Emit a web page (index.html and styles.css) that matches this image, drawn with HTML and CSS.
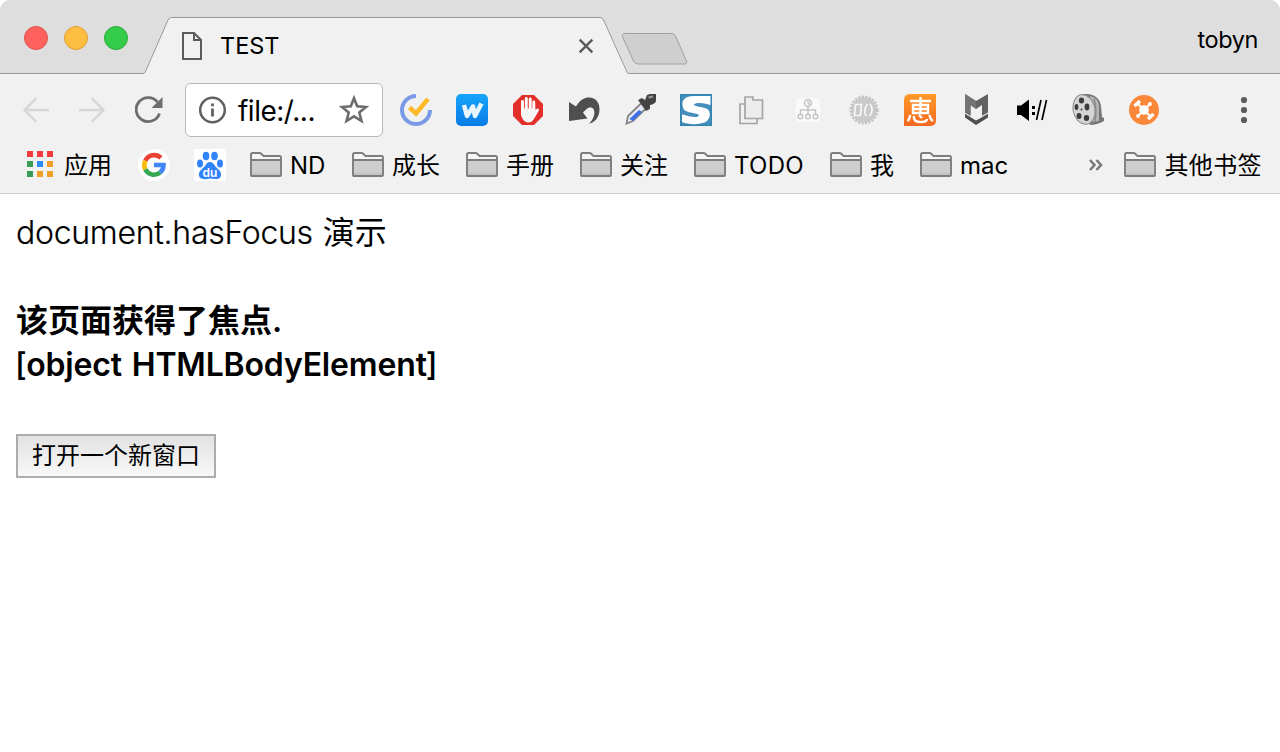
FILE: index.html
```html
<!DOCTYPE html>
<html lang="zh-CN">
<head>
<meta charset="utf-8">
<title>TEST</title>
<link rel="stylesheet" href="styles.css">
</head>
<body>
<svg class="defs" width="0" height="0" aria-hidden="true">
  <symbol id="folder" viewBox="0 0 32 26">
    <path d="M1 8V2.5Q1 1 2.500 1H9.500Q10.500 1 11.500 2L13.500 4H29.500Q31 4 31 5.500V8Z" fill="#f6f6f6"/>
    <path d="M1 8H31V24H1Z" fill="#cecece"/><path d="M2 21H30V24H2Z" fill="#c2c2c2"/>
    <path d="M1 8V2.500Q1 1 2.500 1H9.500Q10.500 1 11.500 2L13.500 4H29.500Q31 4 31 5.500V23Q31 24 30 24H2Q1 24 1 23ZM1 8H31" fill="none" stroke="#7d7d7d" stroke-width="1.900"/>
  </symbol>
</svg>
<header class="browser">
  <div class="strip">
    <svg class="strip-shape" width="1280" height="74" viewBox="0 0 1280 74">
      <path d="M0 73.500H143Q144.500 73.500 145.300 72L168 20Q169.300 17.500 171.500 17.500H600Q602.300 17.500 603.500 20L627 72Q627.700 73.500 629 73.500H1280V75H0Z" fill="#f1f1f1" stroke="#999"/>
      <path d="M625 33.500H671.500Q674 33.500 675.500 36L686.300 60.500Q687.500 64 685 64H638Q635 64 633.500 61L622.500 37Q621.500 33.500 625 33.500Z" fill="#cfcfcf" stroke="#a0a0a0"/>
    </svg>
    <div class="lights"><i class="light red"></i><i class="light yellow"></i><i class="light green"></i></div>
    <div class="tab">
      <svg width="22" height="30" viewBox="0 0 22 30" fill="none" stroke="#5b5b5e" stroke-width="2"><path d="M2 2H13L20 9V28H2ZM13 2V9H20"/></svg>
      <span class="tab-title">TEST</span>
      <svg class="close" width="16" height="16" viewBox="0 0 16 16"><path d="M1.700 1.700L14.300 14.300M14.300 1.700L1.700 14.300" stroke="#5a5a5a" stroke-width="2.400"/></svg>
    </div>
    <span class="user">tobyn</span>
  </div>

  <div class="toolbar">
    <svg class="nav" width="28" height="28" viewBox="0 0 28 28" fill="none" stroke="#d6d6d6" stroke-width="2.400"><path d="M27 14H3M14.500 2L2.500 14L14.500 26"/></svg>
    <svg class="nav" width="28" height="28" viewBox="0 0 28 28" fill="none" stroke="#d6d6d6" stroke-width="2.400"><path d="M1 14H25M13.500 2L25.500 14L13.500 26"/></svg>
    <svg class="nav" width="28" height="28" viewBox="0 0 28 28"><path d="M24.500 17.500A12 12 0 1 1 22.500 6" fill="none" stroke="#6e6e6e" stroke-width="2.800"/><path d="M27.500 1V12H16.500Z" fill="#6e6e6e"/></svg>
    <div class="address">
      <svg width="28" height="28" viewBox="0 0 28 28"><circle cx="13.500" cy="14" r="12.300" fill="none" stroke="#606060" stroke-width="2.500"/><path d="M12.100 7.500H14.900V10.300H12.100ZM12.100 12.600H14.900V20.500H12.100Z" fill="#606060"/></svg>
      <span class="url">file:/...</span>
      <svg class="star" width="30" height="30" viewBox="0 0 30 30"><path d="M15 3.200L18.200 11.300L27 12L20.300 17.500L22.500 26L15 21.400L7.500 26L9.700 17.500L3 12L11.800 11.300Z" fill="none" stroke="#6c6c6c" stroke-width="2.600"/></svg>
    </div>
    <div class="extensions">
      <svg viewBox="0 0 32 32" fill="none"><path d="M16 2A14 14 0 1 0 30 16" stroke="#7b9ae6" stroke-width="4"/><path d="M9.500 13.500L16 19.500L28 5" stroke="#ffb928" stroke-width="4.500"/></svg>
      <svg viewBox="0 0 32 32"><defs><linearGradient id="blue" x2="0" y2="1"><stop stop-color="#16a5fb"/><stop offset="1" stop-color="#087be6"/></linearGradient></defs><rect width="32" height="32" rx="5" fill="url(#blue)"/><path d="M8 11L11 22L17 12.500L19 22L25.500 9.500" fill="none" stroke="#e9f6ff" stroke-width="4.500" stroke-linejoin="round"/></svg>
      <svg viewBox="0 0 32 32"><path d="M10 1H22L31 10V22L22 31H10L1 22V10Z" fill="#e42e2a"/><path d="M10.500 18V7.500M14.300 16V4.500M18.200 16V5M21.800 18V8M22 22L25.500 16" stroke="#fff" stroke-width="2.900" stroke-linecap="round"/><path d="M9 14.500H23.300L24 18L22.500 24Q20 29 15.500 28.500Q11 28 9 21Z" fill="#f5f5f5"/></svg>
      <svg viewBox="0 0 32 32"><path d="M1 8L8 12.500C12 6 16 3.500 21 3.500C28 3.500 31.500 9 31.500 15C31.500 23 27 28.500 21 29.500C25.500 25 26.500 20 24.500 17C22.500 14 18 15.500 15 18.500L19.500 24.500L1 27Z" fill="#4f4f4f"/><path d="M16.500 20C16.500 14.500 22.500 11.500 25.500 15C28 19 25 26 21 29.500C24 25 24.500 20 23 18.500C21 17 18.500 18 16.500 20Z" fill="#f1f1f1"/></svg>
      <svg viewBox="0 0 32 32"><path d="M4 22L17.500 9L22.500 14L9 27L2.500 29.500Z" fill="#e8e9f8" stroke="#858585" stroke-width="1.800"/><path d="M5.500 25L15 16L18 18L9 27Z" fill="#3c6ee8"/><path d="M14 6L18 4L21 6L23 1Q27-1 32 0V7Q31 10 26 11L26 15L22 17Z" fill="#444"/><path d="M24.500 3.500L29 2.500" stroke="#999" stroke-width="2"/></svg>
      <svg viewBox="0 0 32 32"><rect width="32" height="32" fill="#3583af"/><rect x="1.500" y="1.500" width="29" height="29" fill="#458fbd"/><path d="M30.500 2H14C5 2 2 6 2.500 11C3 17 7 18 13 19C19 20 20 21 18 22.500C15 24 8 22 2 20.500V28C9 31 22 31 27 27C32 22 30 15 25 14C19 12.500 13 12 14 10.500C17 8 24 9 30.500 11Z" fill="#fff"/></svg>
      <svg viewBox="0 0 32 32" fill="none" stroke="#a5a5a5" stroke-width="1.700"><path d="M9 10H4V29.500H21V25"/><path d="M9 3H17V6H26.500V24.500H9Z" fill="#ececec"/></svg>
      <svg viewBox="0 0 32 32" fill="none" stroke="#c5c5c5" stroke-width="1.500"><rect x="4" y="4" width="24" height="24" rx="4" fill="#fafafa" stroke="none"/><circle cx="16" cy="9" r="3.500"/><path d="M16 13V20M8.500 20V16H23.500V20M15 8H17V11"/><circle cx="8.500" cy="22.500" r="2.300"/><circle cx="16" cy="22.500" r="2.300"/><circle cx="23.500" cy="22.500" r="2.300"/></svg>
      <svg viewBox="0 0 32 32" fill="none"><circle cx="16" cy="16" r="12.500" fill="#cacaca"/><circle cx="16" cy="16" r="13.200" stroke="#c2c2c2" stroke-width="2.600" stroke-dasharray="2.200 1.300"/><path d="M7.500 10.500H13.500L12.500 21.500H6.500ZM19.500 10Q15 16 18 22M22 10Q26.500 16 21.500 22" stroke="#f7f7f7" stroke-width="1.700"/></svg>
      <svg viewBox="0 0 32 32" fill="none"><defs><linearGradient id="orange" x2="0" y2="1"><stop stop-color="#ff9a28"/><stop offset="1" stop-color="#f36820"/></linearGradient></defs><path d="M6 0H32V26Q32 32 26 32H0V6Q0 0 6 0Z" fill="url(#orange)"/><path d="M6 7H27M16.500 3V20M9 11H24V19H9ZM9 15H24M6 21Q6 25 3.500 27M10 22Q9 28 16.500 28Q23 28 23 25M15 21L18 24M25.500 21Q26 25 29 27" stroke="#fff" stroke-width="2.400"/></svg>
      <svg viewBox="0 0 32 32"><path d="M5 0L16 7L28 0V20L22 23V11L16 15L10.500 11V23L5 20Z" fill="#626262"/><path d="M5 20L16 26.500L28 20V23.500L16 31L5 23.500Z" fill="#4f4f4f"/><path d="M5 19L16 25.500L28 19" stroke="#f1f1f1" stroke-width="1" fill="none"/><path d="M5 0L16 7V15L10.500 11V21L5 18Z" fill="#737373"/></svg>
      <svg viewBox="0 0 32 32"><path d="M1 11.500H5L13 5.500V27L5 21H1Z" fill="#000"/><path d="M16 12H19V15H16ZM16 18H19V21H16Z" fill="#000"/><path d="M20.500 26L25 6M26 26L30.500 6" stroke="#000" stroke-width="1.700"/></svg>
      <svg viewBox="0 0 32 32"><path d="M10 0Q27-1 29 12L30 23L32 24V27Q25 31 18 31Z" fill="#777"/><path d="M18 2Q27 4 27 13V27L20 28Z" fill="#b5b5b5"/><path d="M22 5Q25 14 23 28" fill="none" stroke="#888" stroke-width="1.500"/><ellipse cx="12" cy="15.500" rx="10.800" ry="15" fill="#d4d4d4" stroke="#8d8d8d" transform="rotate(-12 12 15.500)"/><g fill="#3c3c3c"><ellipse cx="9.500" cy="6.500" rx="2.600" ry="3"/><ellipse cx="4.500" cy="13" rx="1.900" ry="3"/><ellipse cx="15" cy="13" rx="2.400" ry="3.400"/><ellipse cx="7" cy="22" rx="2.500" ry="3"/><ellipse cx="14.500" cy="24" rx="2.700" ry="3"/><circle cx="9.500" cy="15.500" r="1"/></g></svg>
      <svg viewBox="0 0 32 32"><circle cx="16" cy="16" r="15" fill="#fa873a"/><path d="M9 9L23 23M22 10L10 22" stroke="#fff" stroke-width="2"/><circle cx="16" cy="16" r="4.800" fill="#fff"/><path d="M6.500 12L12 7M20 25L25.500 20" stroke="#fff" stroke-width="3.500"/><circle cx="22" cy="10" r="1.900" fill="#fff"/><circle cx="10" cy="22" r="1.900" fill="#fff"/></svg>
    </div>
    <svg class="more" width="8" height="28" viewBox="0 0 8 28" fill="#5c5c5c"><circle cx="4" cy="4" r="3.100"/><circle cx="4" cy="14" r="3.100"/><circle cx="4" cy="24" r="3.100"/></svg>
  </div>

  <nav class="bookmarks">
    <div class="bm apps">
      <svg class="grid" width="26" height="26" viewBox="0 0 26 26"><path d="M0 0H6V6H0ZM10 0H16V6H10ZM20 0H26V6H20Z" fill="#f33b3b"/><path d="M0 10H6V16H0ZM0 20H6V26H0Z" fill="#3a9b57"/><path d="M10 10H16V16H10Z" fill="#2f8dfa"/><path d="M20 10H26V16H20ZM10 20H16V26H10ZM20 20H26V26H20Z" fill="#f0a029"/></svg>
      <span>应用</span>
    </div>
    <div class="bm w56">
      <svg width="32" height="32" viewBox="0 0 32 32" fill="none" stroke-width="4.600"><circle cx="16" cy="16" r="16" fill="#fff"/><path d="M22.900 8.900A9.700 9.700 0 0 0 7.300 11.700" stroke="#ea4335"/><path d="M7.300 11.700A9.700 9.700 0 0 0 7.300 20.300" stroke="#fbbc05"/><path d="M7.300 20.300A9.700 9.700 0 0 0 22.200 23.500" stroke="#34a853"/><path d="M22.200 23.500A9.700 9.700 0 0 0 25.500 16H16" stroke="#4285f4"/></svg>
    </div>
    <div class="bm w56">
      <svg width="32" height="32" viewBox="0 0 32 32"><path fill="#fff" d="M0 0H32V32H0Z"/><g fill="#3083fb"><ellipse cx="12" cy="7" rx="3.300" ry="4.300"/><ellipse cx="20.500" cy="7" rx="3.300" ry="4.300"/><ellipse cx="6" cy="14.500" rx="3" ry="4"/><ellipse cx="26" cy="14.500" rx="3" ry="4"/><path d="M16 13Q19 13 21 17L26 22Q29 28 24 30Q20 30 16 29.500Q11 31 7 29.500Q3 27 6 22L11 17Q13 13 16 13Z"/></g><text class="du" x="8.500" y="27.500">du</text></svg>
    </div>
    <div class="bm w102"><svg class="folder"><use href="#folder"/></svg><span>ND</span></div>
    <div class="bm w114"><svg class="folder"><use href="#folder"/></svg><span>成长</span></div>
    <div class="bm w114"><svg class="folder"><use href="#folder"/></svg><span>手册</span></div>
    <div class="bm w114"><svg class="folder"><use href="#folder"/></svg><span>关注</span></div>
    <div class="bm w136"><svg class="folder"><use href="#folder"/></svg><span>TODO</span></div>
    <div class="bm w90"><svg class="folder"><use href="#folder"/></svg><span>我</span></div>
    <div class="bm"><svg class="folder"><use href="#folder"/></svg><span>mac</span></div>
    <svg class="overflow" width="14" height="12" viewBox="0 0 14 12" fill="none" stroke="#777" stroke-width="2.500"><path d="M1 1L5.500 6L1 11M7.500 1L12 6L7.500 11"/></svg>
    <div class="bm other"><svg class="folder"><use href="#folder"/></svg><span>其他书签</span></div>
  </nav>
</header>
<main class="page">
  <p class="heading"><span class="latin">document.hasFocus</span> 演示</p>
  <div class="status">该页面获得了焦点.</div>
  <div class="status object"><span class="bracket">[</span>object HTMLBodyElement<span class="bracket">]</span></div>
  <button class="open"><span>打开一个新窗口</span></button>
</main>
</body>
</html>
```
FILE: styles.css
```css
* { box-sizing: border-box; }
body { margin: 0; background: #fff; color: #000; font-family: Inter, "Noto Sans CJK SC", sans-serif; width: 1280px; height: 752px; overflow: hidden; }
svg { display: block; flex: none; }
.defs { position: absolute; }
.browser { height: 194px; background: #f1f1f1; border-bottom: 1px solid #cdcdcd; border-radius: 10px 10px 0 0; overflow: hidden; }
.strip { position: relative; height: 74px; background: #dedede; display: flex; }
.strip-shape { position: absolute; inset: 0; }
.lights { display: flex; gap: 16px; padding: 26px 0 0 24px; width: 182px; }
.light { width: 24px; height: 24px; border-radius: 50%; border: 1px solid; }
.red { background: #fd625d; border-color: #e2504b; }
.yellow { background: #fdbe41; border-color: #e0a136; }
.green { background: #35cb4b; border-color: #27ac31; }
.tab { position: relative; display: flex; align-items: center; width: 413px; height: 56px; margin-top: 18px; margin-left: -1px; }
.tab-title { font-size: 23.5px; line-height: 28px; margin-left: 17px; }
.close { margin-left: auto; }
.user { position: relative; margin: 26px 22px 0 auto; font-size: 23.5px; line-height: 28px; letter-spacing: -0.4px; }
.toolbar { height: 72px; padding: 0 36px 0 22px; display: flex; align-items: center; }
.nav { margin-right: 28px; }
.nav:nth-child(3) { margin-left: 1px; margin-right: 27px; }
.address { width: 198px; height: 54px; margin-left: -5px; border: 1px solid #b7b7b7; border-radius: 6px; background: #fff; display: flex; align-items: center; padding: 0 13px 0 13px; }
.url { font-size: 28px; margin-left: 11px; line-height: 36px; padding-top: 2px; letter-spacing: -0.5px; }
.star { margin-left: auto; }
.extensions { display: flex; gap: 24px; margin-left: 17px; }
.extensions svg { width: 32px; height: 32px; }
.more { margin-left: auto; margin-right: -4px; }
.bookmarks { height: 38px; padding: 0 18px 0 27px; display: flex; align-items: center; }
.bm { display: flex; align-items: center; gap: 8px; font-size: 24px; line-height: 36px; white-space: nowrap; flex: none; }
.bm span { padding-top: 2px; }
.grid { margin-top: -2px; }
.apps { width: 111px; gap: 11px; }
.w56 { width: 56px; }
.w90 { width: 90px; }
.w102 { width: 102px; }
.w114 { width: 114px; }
.w136 { width: 136px; letter-spacing: 0.3px; }
.folder { width: 32px; height: 26px; }
.du { font: 600 12px Inter, sans-serif; fill: #fff; }
.overflow { margin-left: auto; }
.other { margin-left: 21px; letter-spacing: 0.4px; }
.page { padding: 17px 16px; font-size: 32px; line-height: 44px; }
.heading { margin: 0 0 44px; word-spacing: 1px; }
.latin { font-weight: 300; letter-spacing: -0.28px; -webkit-text-stroke: 0.2px #000; }
.status { font-weight: 600; }
.object { letter-spacing: -0.17px; word-spacing: 2px; }
.bracket { font-weight: 500; display: inline-block; margin: 0 -0.5px 0 -1px; }
.open { display: block; width: 200px; height: 44px; margin-top: 47px; padding: 0 0 4px; border: 2px solid #adadad; background: linear-gradient(#e2e2e2, #f8f8f8); font: 24px "Noto Sans CJK SC", sans-serif; line-height: 36px; color: #000; }
```
